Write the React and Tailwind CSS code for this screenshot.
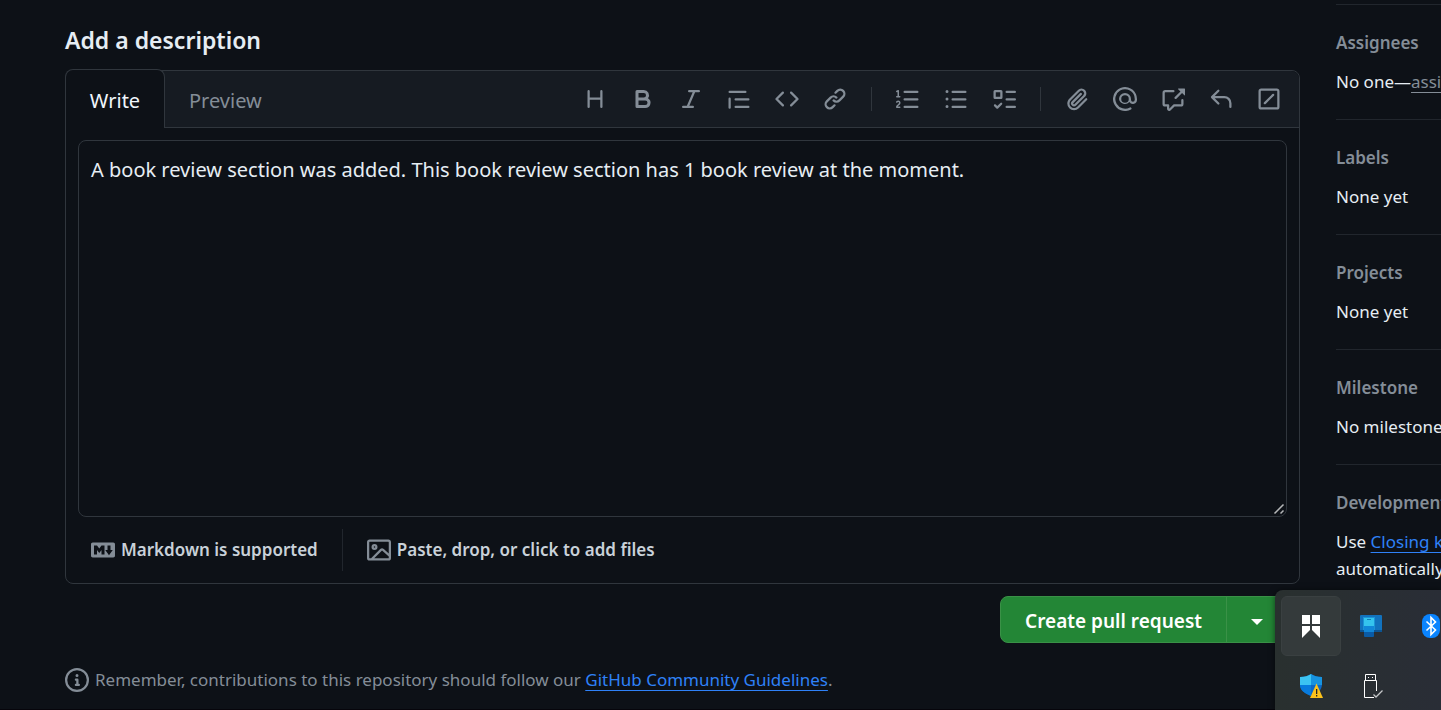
const ICONS = {
  heading: 'M3.75 2a.75.75 0 0 1 .75.75V7h7V2.75a.75.75 0 0 1 1.5 0v10.5a.75.75 0 0 1-1.5 0V8.5h-7v4.75a.75.75 0 0 1-1.5 0V2.75A.75.75 0 0 1 3.75 2Z',
  bold: 'M4 2h4.5a3.501 3.501 0 0 1 2.852 5.53A3.499 3.499 0 0 1 9.5 14H4a1 1 0 0 1-1-1V3a1 1 0 0 1 1-1Zm1 7v3h4.5a1.5 1.5 0 0 0 0-3Zm3.5-2a1.5 1.5 0 0 0 0-3H5v3Z',
  italic: 'M6 2.75A.75.75 0 0 1 6.75 2h6.5a.75.75 0 0 1 0 1.5h-2.505l-3.858 9H9.25a.75.75 0 0 1 0 1.5h-6.5a.75.75 0 0 1 0-1.5h2.505l3.858-9H6.75A.75.75 0 0 1 6 2.75Z',
  quote: 'M1.75 2.5h10.5a.75.75 0 0 1 0 1.5H1.75a.75.75 0 0 1 0-1.5Zm4 5h8.5a.75.75 0 0 1 0 1.5h-8.5a.75.75 0 0 1 0-1.5Zm0 5h8.5a.75.75 0 0 1 0 1.5h-8.5a.75.75 0 0 1 0-1.5ZM2.5 7.75v6a.75.75 0 0 1-1.5 0v-6a.75.75 0 0 1 1.5 0Z',
  code: 'm11.28 3.22 4.25 4.25a.75.75 0 0 1 0 1.06l-4.25 4.25a.749.749 0 0 1-1.275-.326.749.749 0 0 1 .215-.734L13.94 8l-3.72-3.72a.749.749 0 0 1 .326-1.275.749.749 0 0 1 .734.215Zm-6.56 0a.751.751 0 0 1 1.042.018.751.751 0 0 1 .018 1.042L2.06 8l3.72 3.72a.749.749 0 0 1-.326 1.275.749.749 0 0 1-.734-.215L.47 8.53a.75.75 0 0 1 0-1.06Z',
  link: 'm7.775 3.275 1.25-1.25a3.5 3.5 0 1 1 4.95 4.95l-2.5 2.5a3.5 3.5 0 0 1-4.95 0 .751.751 0 0 1 .018-1.042.751.751 0 0 1 1.042-.018 1.998 1.998 0 0 0 2.83 0l2.5-2.5a2.002 2.002 0 0 0-2.83-2.83l-1.25 1.25a.751.751 0 0 1-1.042-.018.751.751 0 0 1-.018-1.042Zm-4.69 9.64a1.998 1.998 0 0 0 2.83 0l1.25-1.25a.751.751 0 0 1 1.042.018.751.751 0 0 1 .018 1.042l-1.25 1.25a3.5 3.5 0 1 1-4.95-4.95l2.5-2.5a3.5 3.5 0 0 1 4.95 0 .751.751 0 0 1-.018 1.042.751.751 0 0 1-1.042.018 1.998 1.998 0 0 0-2.83 0l-2.5 2.5a1.998 1.998 0 0 0 0 2.83Z',
  listOrdered: 'M5 3.25a.75.75 0 0 1 .75-.75h8.5a.75.75 0 0 1 0 1.5h-8.5A.75.75 0 0 1 5 3.25Zm0 5a.75.75 0 0 1 .75-.75h8.5a.75.75 0 0 1 0 1.5h-8.5A.75.75 0 0 1 5 8.25Zm0 5a.75.75 0 0 1 .75-.75h8.5a.75.75 0 0 1 0 1.5h-8.5a.75.75 0 0 1-.75-.75ZM.924 10.32a.5.5 0 0 1-.851-.525l.001-.001.001-.002.002-.004.007-.011c.097-.144.215-.273.348-.384.228-.19.588-.392 1.068-.392.468 0 .858.181 1.126.484.259.294.377.673.377 1.038 0 .987-.686 1.495-1.156 1.845l-.047.035c-.303.225-.522.4-.654.597h1.357a.5.5 0 0 1 0 1H.5a.5.5 0 0 1-.5-.5c0-1.005.692-1.52 1.167-1.875l.035-.025c.531-.396.8-.625.8-1.078a.57.57 0 0 0-.128-.376C1.806 10.068 1.695 10 1.5 10a.658.658 0 0 0-.429.163.835.835 0 0 0-.144.153ZM2.003 2.5V6h.503a.5.5 0 0 1 0 1H.5a.5.5 0 0 1 0-1h.503V3.308l-.28.14a.5.5 0 0 1-.446-.895l1.003-.5a.5.5 0 0 1 .723.447Z',
  listUnordered: 'M5.75 2.5h8.5a.75.75 0 0 1 0 1.5h-8.5a.75.75 0 0 1 0-1.5Zm0 5h8.5a.75.75 0 0 1 0 1.5h-8.5a.75.75 0 0 1 0-1.5Zm0 5h8.5a.75.75 0 0 1 0 1.5h-8.5a.75.75 0 0 1 0-1.5ZM2 14a1 1 0 1 1 0-2 1 1 0 0 1 0 2Zm1-6a1 1 0 1 1-2 0 1 1 0 0 1 2 0ZM2 4a1 1 0 1 1 0-2 1 1 0 0 1 0 2Z',
  tasklist: 'M2 2h4a1 1 0 0 1 1 1v4a1 1 0 0 1-1 1H2a1 1 0 0 1-1-1V3a1 1 0 0 1 1-1Zm4.655 8.595a.75.75 0 0 1 0 1.06L4.03 14.28a.75.75 0 0 1-1.06 0l-1.5-1.5a.749.749 0 0 1 .326-1.275.749.749 0 0 1 .734.215l.97.97 2.095-2.095a.75.75 0 0 1 1.06 0ZM9.75 2.5h5.5a.75.75 0 0 1 0 1.5h-5.5a.75.75 0 0 1 0-1.5Zm0 5h5.5a.75.75 0 0 1 0 1.5h-5.5a.75.75 0 0 1 0-1.5Zm0 5h5.5a.75.75 0 0 1 0 1.5h-5.5a.75.75 0 0 1 0-1.5Zm-7.25-9v3h3v-3Z',
  paperclip: 'M12.212 3.02a1.753 1.753 0 0 0-2.478.003l-5.83 5.83a3.007 3.007 0 0 0-.88 2.127c0 .795.315 1.551.88 2.116.567.567 1.333.89 2.126.89.79 0 1.548-.321 2.116-.89l5.48-5.48a.75.75 0 0 1 1.061 1.06l-5.48 5.48a4.492 4.492 0 0 1-3.177 1.33c-1.2 0-2.345-.487-3.187-1.33a4.483 4.483 0 0 1-1.32-3.177c0-1.195.475-2.341 1.32-3.186l5.83-5.83a3.25 3.25 0 0 1 5.553 2.297c0 .863-.343 1.691-.953 2.301L7.439 12.39c-.375.377-.884.59-1.416.593a1.998 1.998 0 0 1-1.412-.593 1.992 1.992 0 0 1 0-2.828l5.48-5.48a.751.751 0 0 1 1.042.018.751.751 0 0 1 .018 1.042l-5.48 5.48a.492.492 0 0 0 0 .707.499.499 0 0 0 .352.154.51.51 0 0 0 .356-.154l5.833-5.827a1.755 1.755 0 0 0 0-2.481Z',
  mention: 'M4.75 2.37a6.501 6.501 0 0 0 6.5 11.26.75.75 0 0 1 .75 1.298A8 8 0 1 1 16 8v.5a2.749 2.749 0 0 1-5.072 1.475A3.999 3.999 0 0 1 4 8a4 4 0 0 1 8 0v.5a1.25 1.25 0 0 0 2.5 0V8a6.5 6.5 0 0 0-9.75-5.63ZM10.5 8a2.5 2.5 0 1 0-5 0 2.5 2.5 0 0 0 5 0Z',
  crossReference: 'M2.75 3.5a.25.25 0 0 0-.25.25v7.5c0 .138.112.25.25.25h2a.75.75 0 0 1 .75.75v2.19l2.72-2.72a.749.749 0 0 1 .53-.22h4.5a.25.25 0 0 0 .25-.25v-2.5a.75.75 0 0 1 1.5 0v2.5A1.75 1.75 0 0 1 13.25 13H9.06l-2.573 2.573A1.458 1.458 0 0 1 4 14.543V13H2.75A1.75 1.75 0 0 1 1 11.25v-7.5C1 2.784 1.784 2 2.75 2h5.5a.75.75 0 0 1 0 1.5ZM16 1.25v4.146a.25.25 0 0 1-.427.177L14.03 4.03l-3.75 3.75a.749.749 0 0 1-1.275-.326.749.749 0 0 1 .215-.734l3.75-3.75-1.543-1.543A.25.25 0 0 1 11.604 1h4.146a.25.25 0 0 1 .25.25Z',
  reply: 'M6.78 1.97a.75.75 0 0 1 0 1.06L3.81 6h6.44A4.75 4.75 0 0 1 15 10.75v2.5a.75.75 0 0 1-1.5 0v-2.5a3.25 3.25 0 0 0-3.25-3.25H3.81l2.97 2.97a.749.749 0 0 1-.326 1.275.749.749 0 0 1-.734-.215L1.47 7.28a.75.75 0 0 1 0-1.06l4.25-4.25a.75.75 0 0 1 1.06 0Z',
  slash: 'M13.25 1c.966 0 1.75.784 1.75 1.75v10.5A1.75 1.75 0 0 1 13.25 15H2.75A1.75 1.75 0 0 1 1 13.25V2.75C1 1.784 1.784 1 2.75 1ZM2.75 2.5a.25.25 0 0 0-.25.25v10.5c0 .138.112.25.25.25h10.5a.25.25 0 0 0 .25-.25V2.75a.25.25 0 0 0-.25-.25Zm8.53 3.28-5.5 5.5a.75.75 0 1 1-1.06-1.06l5.5-5.5a.75.75 0 1 1 1.06 1.06Z',
  info: 'M0 8a8 8 0 1 1 16 0A8 8 0 0 1 0 8Zm8-6.5a6.5 6.5 0 1 0 0 13 6.5 6.5 0 0 0 0-13ZM6.5 7.75A.75.75 0 0 1 7.25 7h1a.75.75 0 0 1 .75.75v2.75h.25a.75.75 0 0 1 0 1.5h-2a.75.75 0 0 1 0-1.5h.25v-2h-.25a.75.75 0 0 1-.75-.75ZM8 6a1 1 0 1 1 0-2 1 1 0 0 1 0 2Z',
  image: 'M16 13.25A1.75 1.75 0 0 1 14.25 15H1.75A1.75 1.75 0 0 1 0 13.25V2.75C0 1.784.784 1 1.75 1h12.5c.966 0 1.75.784 1.75 1.75ZM1.75 2.5a.25.25 0 0 0-.25.25v10.5c0 .138.112.25.25.25h.94l.03-.03 6.077-6.078a1.75 1.75 0 0 1 2.412-.06L14.5 10.31V2.75a.25.25 0 0 0-.25-.25Zm12.5 11a.25.25 0 0 0 .25-.25v-.917l-4.298-3.889a.25.25 0 0 0-.344.009L4.81 13.5ZM7 6a2 2 0 1 1-3.999.001A2 2 0 0 1 7 6ZM5.5 6a.5.5 0 1 0-1 0 .5.5 0 0 0 1 0Z',
  markdown: 'M14.85 3c.63 0 1.15.52 1.14 1.15v7.7c0 .63-.51 1.15-1.15 1.15H1.15C.52 13 0 12.48 0 11.84V4.15C0 3.52.52 3 1.15 3ZM9 11V5H7L5.5 7 4 5H2v6h2V8l1.5 1.92L7 8v3Zm2.99.5L14.5 8H13V5h-2v3H9.5Z',
};

function Icon({ name }) {
  return (
    <svg viewBox="0 0 16 16" aria-hidden="true" className="size-6 shrink-0 fill-[#848d97]">
      <path d={ICONS[name]} />
    </svg>
  );
}

const TOOL_GROUPS = [
  [['heading', 'Heading'], ['bold', 'Bold'], ['italic', 'Italic'], ['quote', 'Quote'], ['code', 'Code'], ['link', 'Link']],
  [['listOrdered', 'Numbered list'], ['listUnordered', 'Unordered list'], ['tasklist', 'Task list']],
  [['paperclip', 'Attach files'], ['mention', 'Mention'], ['crossReference', 'Reference'], ['reply', 'Saved replies'], ['slash', 'Slash commands']],
];

function Toolbar() {
  return (
    <div role="toolbar" aria-label="Formatting" className="flex items-center pr-1.5">
      {TOOL_GROUPS.map((group, i) => (
        <div key={i} className="flex items-center">
          {i > 0 && <span className="mx-3 h-6 w-px bg-[#30363d]" />}
          <div className="flex items-center">
            {group.map(([icon, label]) => (
              <button key={icon} type="button" aria-label={label} className="flex size-12 items-center justify-center">
                <Icon name={icon} />
              </button>
            ))}
          </div>
        </div>
      ))}
    </div>
  );
}

function Editor() {
  return (
    <div className="rounded-lg border border-[#30363d]">
      <div className="flex h-[57px] items-stretch justify-between rounded-t-lg border-b border-[#30363d] bg-[#161b22]">
        <div role="tablist" className="-mt-0.5 -mb-px -ml-px flex text-xl">
          <button type="button" role="tab" aria-selected="true" className="w-[100px] rounded-t-lg border border-b-0 border-[#30363d] bg-[#0d1117] pt-1 text-[#f0f6fc]">
            Write
          </button>
          <button type="button" role="tab" aria-selected="false" className="px-6 pt-1 text-[#848d97]">
            Preview
          </button>
        </div>
        <Toolbar />
      </div>
      <div className="px-3 pt-3">
        <div className="relative">
          <textarea
            aria-label="Description"
            defaultValue="A book review section was added. This book review section has 1 book review at the moment."
            className="block h-[377px] w-full resize-none rounded-lg border border-[#30363d] bg-[#0d1117] px-3 py-[13px] text-xl leading-8 text-[#e6edf3]"
          />
          <svg viewBox="0 0 12 12" aria-hidden="true" className="pointer-events-none absolute right-0.5 bottom-0.5 size-3">
            <path d="M1.500 10.500 10.500 1.500M7.500 10.500l3-3" fill="none" stroke="#b4b6b8" strokeWidth="1.500" />
          </svg>
        </div>
      </div>
      <div className="flex h-[66px] items-center px-[25px] text-[17px] font-semibold text-[#c9d1d9]">
        <a href="#markdown" className="flex items-center gap-1.5">
          <Icon name="markdown" />
          Markdown is supported
        </a>
        <span className="mx-6 h-[42px] w-px bg-[#21262d]" />
        <button type="button" className="flex items-center gap-1.5">
          <Icon name="image" />
          Paste, drop, or click to add files
        </button>
      </div>
    </div>
  );
}

function SideSection({ title, children }) {
  return (
    <section className="min-h-[115px] border-t border-[#21262d] pt-6 text-[17px] leading-[27px] whitespace-nowrap text-[#e6edf3]">
      <h3 className="mb-3 font-semibold text-[#848d97]">{title}</h3>
      {children}
    </section>
  );
}

function Sidebar() {
  return (
    <aside className="w-[105px] shrink-0 pt-1">
      <SideSection title="Assignees">
        <p>No one—<a href="#assign" className="text-[#848d97] underline underline-offset-4">assign yourself</a></p>
      </SideSection>
      <SideSection title="Labels"><p>None yet</p></SideSection>
      <SideSection title="Projects"><p>None yet</p></SideSection>
      <SideSection title="Milestone"><p>No milestone</p></SideSection>
      <SideSection title="Development">
        <p>Use <a href="#keywords" className="text-[#2f81f7] underline underline-offset-4">Closing keywords</a></p>
        <p>automatically</p>
      </SideSection>
    </aside>
  );
}

function TrayPopup() {
  return (
    <div className="fixed right-0 bottom-0 grid h-[120px] w-[166px] grid-cols-[60px_60px_60px] grid-rows-[60px_60px] overflow-hidden rounded-tl-lg bg-linear-to-r from-[#29302f] to-[#292d36] p-1.5 shadow-[0_0_6px_#0008]">
      <button type="button" aria-label="Bookmarks" className="flex items-center justify-center rounded-md border border-[#3a4041] bg-[#343a3b]">
        <svg viewBox="0 0 18 23" className="h-[23px] w-[18px] fill-white"><path d="M0 0h8v9H0zM10 0h8v9h-8zM0 11h8v4l-8 8zM10 11h8v12l-8-8z" /></svg>
      </button>
      <button type="button" aria-label="Linked devices" className="flex items-center justify-center">
        <svg viewBox="0 0 24 24" className="size-6">
          <rect x="1" y="1" width="22" height="17" rx="1" fill="#1272bd" />
          <rect x="1" y="16" width="22" height="2" fill="#0c5594" />
          <rect x="4" y="3" width="12" height="13" fill="#1b93d6" />
          <rect x="5" y="16" width="10" height="7" rx="1" fill="#0a5ba6" />
          <rect x="5" y="12" width="10" height="6" fill="#1187d8" />
          <rect x="5" y="4" width="10" height="8" fill="#35c4ee" />
          <rect x="8" y="5" width="4" height="1" fill="#107fb5" />
        </svg>
      </button>
      <button type="button" aria-label="Bluetooth" className="flex items-center justify-center">
        <svg viewBox="0 0 18 24" className="h-6 w-[18px]">
          <rect width="18" height="24" rx="8" fill="#0a84ff" />
          <path d="m4.500 7.500 9 8.500L9 20.500v-17L13.500 8l-9 8.500" fill="none" stroke="#fff" strokeWidth="1.600" />
        </svg>
      </button>
      <button type="button" aria-label="Security" className="flex items-center justify-center">
        <svg viewBox="0 0 24 24" className="size-6">
          <path d="M12 0c3 2 6 3 11 3v7c0 6-4 9-11 12C5 19 1 16 1 10V3c5 0 8-1 11-3Z" fill="#0b68c7" />
          <path d="M12 0v11H1V3c5 0 8-1 11-3Z" fill="#3cc4f2" />
          <path d="M12 0c3 2 6 3 11 3v8H12Z" fill="#1793df" />
          <path d="M1 11h11v11C5 19 1 16 1 11Z" fill="#087bdc" />
          <path d="M17.500 9.500 24 24H11Z" fill="#fcc21b" />
          <path d="M17 15h1.300v5H17zM17 21h1.300v1.500H17z" fill="#222" />
        </svg>
      </button>
      <button type="button" aria-label="Safely remove hardware" className="flex items-center justify-center">
        <svg viewBox="0 0 24 24" className="size-6" fill="none" stroke="#fff">
          <path d="M6.500 6.500v-6h10v6M17.500 17V6.500h-12v17H15" />
          <path d="M9 3.500h1M13 3.500h1" />
          <path d="m14.500 20.500 2.500 2.500 6.500-6.500" stroke="#c5c7c9" strokeWidth="1.300" />
        </svg>
      </button>
    </div>
  );
}

export default function App() {
  return (
    <div className="flex min-h-screen gap-9 overflow-hidden border-b border-[#06050b] bg-[#0d1117] pl-[65px] font-['Noto_Sans',sans-serif]">
      <main className="min-w-0 flex-1 pt-[22px]">
        <h2 className="mb-3 text-[23px] leading-9 font-semibold text-[#e6edf3]">Add a description</h2>
        <Editor />
        <div className="mt-3 flex justify-end">
          <div className="flex h-[47px] rounded-lg border border-[#3a9147] bg-[#238636] text-white">
            <button type="button" className="px-6 pt-1 text-[19px] font-semibold">Create pull request</button>
            <button type="button" aria-label="More options" className="flex w-[73px] items-center border-l border-[#3a9147] pt-1 pl-6">
              <svg viewBox="0 0 12 6" className="h-1.5 w-3 fill-white"><path d="M0 0h12L6 6Z" /></svg>
            </button>
          </div>
        </div>
        <p className="mt-[23px] flex items-center gap-1.5 text-[17px] leading-7 text-[#848d97]">
          <Icon name="info" />
          <span>
            Remember, contributions to this repository should follow our{' '}
            <a href="#guidelines" className="text-[#2f81f7] underline underline-offset-4">GitHub Community Guidelines</a>.
          </span>
        </p>
      </main>
      <Sidebar />
      <TrayPopup />
    </div>
  );
}
